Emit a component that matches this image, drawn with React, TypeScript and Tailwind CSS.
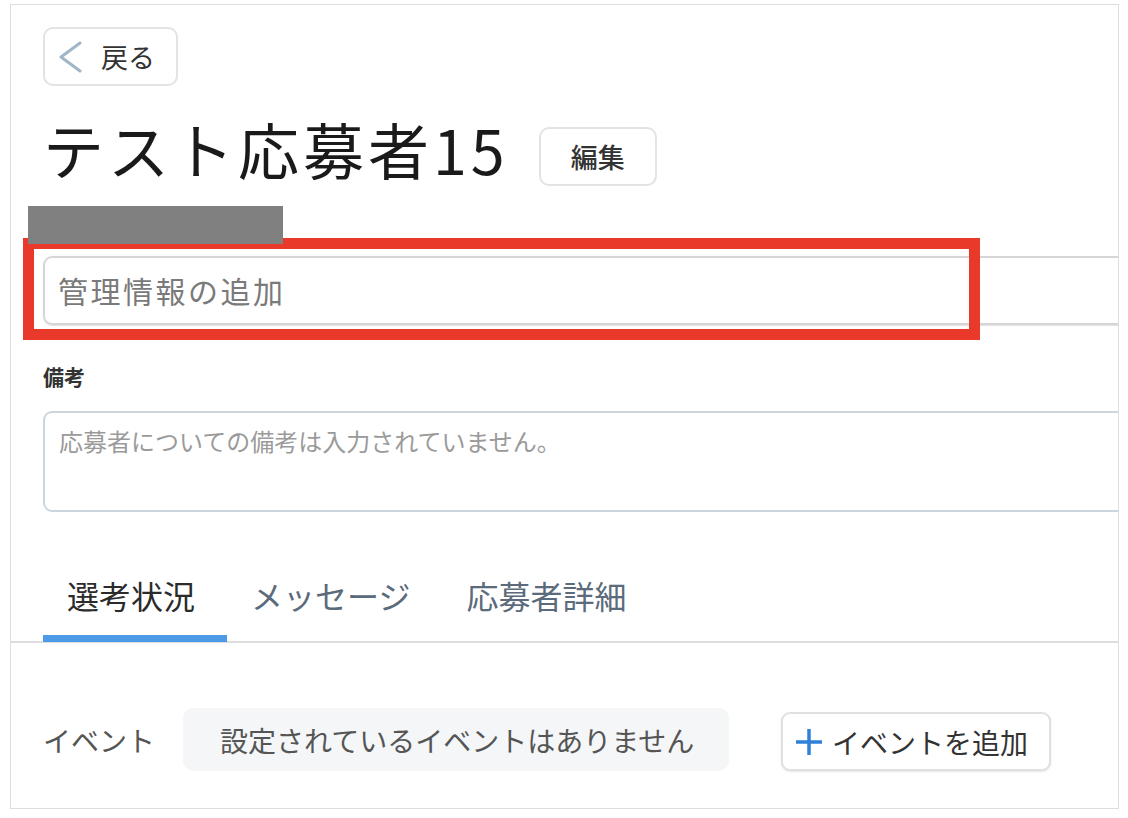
import React from "react";

const font = { fontFamily: '"Noto Sans CJK JP", "Noto Sans", sans-serif' };

export default function App() {
  return (
    <div className="w-[1128px] h-[818px] bg-white" style={font}>
      <div className="relative ml-[10px] mt-[4px] w-[1109px] h-[805px] border border-[#dedede] overflow-hidden bg-white">
        <div className="pl-[32px]">
          {/* back button */}
          <div className="pt-[22px]">
            <button className="flex items-center w-[135px] h-[59px] rounded-[10px] border-2 border-[#e3e3e3] bg-white pl-[12px]">
              <svg width="26" height="32" viewBox="0 0 26 32" className="shrink-0">
                <polyline points="23,2 4,16 23,30" fill="none" stroke="#9fb6c9" strokeWidth="3" strokeLinecap="round" strokeLinejoin="round" />
              </svg>
              <span className="ml-[18px] text-[27px] leading-none text-[#333]">戻る</span>
            </button>
          </div>

          {/* title row */}
          <div className="flex items-center mt-[32px] h-[62px]">
            <h1 className="text-[61px] leading-[62px] font-normal text-[#1a1a1a] tracking-[4px]">テスト応募者15</h1>
            <button className="ml-[30px] mt-[14px] w-[118px] h-[59px] rounded-[10px] border-2 border-[#e3e3e3] bg-white text-[27px] font-medium text-[#333] leading-none">
              編集
            </button>
          </div>
        </div>

        {/* redaction bar */}
        <div className="relative z-10 ml-[17px] mt-[26px] w-[255px] h-[38px] bg-[#808080]" />

        {/* management info input */}
        <div className="pl-[32px] mt-[12px]">
          <div className="w-[1100px] h-[69px] rounded-[9px] border-2 border-[#d6d6d6] shadow-[0_1px_1px_rgba(0,0,0,0.12)] flex items-center pl-[13px] pb-[2px]">
            <span className="text-[30px] tracking-[2.5px] text-[#7a7a7a] leading-none">管理情報の追加</span>
          </div>
        </div>

        {/* red annotation box */}
        <div className="absolute left-[12px] top-[233px] w-[957px] h-[102px] border-[11px] border-[#e8392b]" />

        {/* notes */}
        <div className="pl-[32px] mt-[38px]">
          <div className="text-[21px] font-bold text-[#333] leading-[26px]">備考</div>
          <div className="mt-[22px] w-[1100px] h-[101px] rounded-[9px] border-2 border-[#cbd5de] pl-[14px] pt-[16px]">
            <span className="text-[24px] leading-none text-[#9a9a9a]">応募者についての備考は入力されていません。</span>
          </div>
        </div>

        {/* tabs */}
        <div className="mt-[63px] pl-[32px] border-b-2 border-[#dddddd]">
          <div className="flex">
            <div className="relative pl-[24px] pr-[32px] pb-[26px] text-[32px] leading-[40px] text-[#2b2b2b]">
              選考状況
              <div className="absolute left-0 right-0 bottom-[-1px] h-[7px] bg-[#4d9be6]" />
            </div>
            <div className="pl-[24px] pr-[32px] pb-[26px] text-[32px] leading-[40px] text-[#5b6b7b]">メッセージ</div>
            <div className="pl-[24px] pr-[32px] pb-[26px] text-[32px] leading-[40px] text-[#5b6b7b]">応募者詳細</div>
          </div>
        </div>

        {/* events */}
        <div className="pl-[32px] mt-[65px] flex items-center">
          <span className="text-[28px] leading-none text-[#555]">イベント</span>
          <div className="ml-[28px] w-[546px] h-[63px] rounded-[10px] bg-[#f4f6f8] flex items-center pl-[37px]">
            <span className="text-[28px] leading-none text-[#555]">設定されているイベントはありません</span>
          </div>
          <button className="ml-[52px] mt-[4px] w-[270px] h-[59px] rounded-[9px] border-2 border-[#e0e0e0] bg-white shadow-[0_1px_2px_rgba(0,0,0,0.1)] flex items-center pl-[11px]">
            <svg width="30" height="30" viewBox="0 0 30 30" className="shrink-0">
              <line x1="15" y1="2" x2="15" y2="28" stroke="#2f80d8" strokeWidth="3.5" />
              <line x1="2" y1="15" x2="28" y2="15" stroke="#2f80d8" strokeWidth="3.5" />
            </svg>
            <span className="ml-[8px] text-[28px] leading-none text-[#333]">イベントを追加</span>
          </button>
        </div>
      </div>
    </div>
  );
}
